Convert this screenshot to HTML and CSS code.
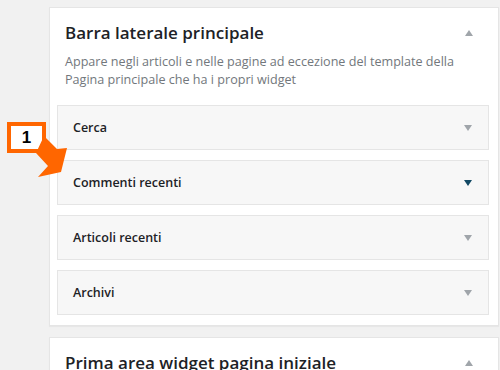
FILE: index.html
```html
<!DOCTYPE html>
<html lang="it">
  <head>
    <meta charset="UTF-8" />
    <title>Widget</title>
    <link rel="stylesheet" href="styles.css">
  </head>
  <body>
    <div class="sidebars">
      <!-- Barra laterale principale -->
      <div class="sidebar open">
        <div class="sidebar-head">
          <h2>Barra laterale principale</h2>
          <span class="toggle up"></span>
        </div>
        <p class="sidebar-desc">
          Appare negli articoli e nelle pagine ad eccezione del template della
          Pagina principale che ha i propri widget
        </p>
        <div class="widget">
          <span class="widget-title">Cerca</span>
          <span class="toggle down"></span>
        </div>
        <div class="widget">
          <span class="widget-title">Commenti recenti</span>
          <span class="toggle down active"></span>
        </div>
        <div class="widget">
          <span class="widget-title">Articoli recenti</span>
          <span class="toggle down"></span>
        </div>
        <div class="widget">
          <span class="widget-title">Archivi</span>
          <span class="toggle down"></span>
        </div>
      </div>

      <div class="sidebar">
        <div class="sidebar-head">
          <h2>Prima area widget pagina iniziale</h2>
          <span class="toggle up"></span>
        </div>
      </div>
    </div>

    <!-- step marker -->
    <div class="step-badge">1</div>
    <svg class="step-arrow" width="80" height="190" viewBox="0 0 80 190">
      <polygon points="44,136 57,149 67,148 61,172 38,177 48,166 36,153" fill="#ff6600" />
    </svg>
  </body>
</html>
```

FILE: styles.css
```css
* {
  box-sizing: border-box;
}

body {
  margin: 0;
  background: #f1f1f1;
  font-family: "Open Sans", sans-serif;
  color: #23282d;
}

.sidebars {
  margin-left: 49px;
  padding-top: 7px;
  width: 450px;
}

.sidebar {
  background: #fff;
  border: 1px solid #e5e5e5;
  box-shadow: 0 1px 1px rgba(0, 0, 0, 0.04);
  padding: 0 9px 10px 7px;
  margin-bottom: 11px;
}

.sidebar-head {
  display: flex;
  justify-content: space-between;
  align-items: center;
  padding: 13px 16px 0 8px;
}

.sidebar-head h2 {
  margin: 0;
  font-size: 17px;
  font-weight: 600;
  line-height: 24px;
  color: #1d2226;
}

.sidebar-desc {
  margin: 8px 0 16px 8px;
  font-size: 12.6px;
  line-height: 18px;
  color: #72777c;
}

.widget {
  display: flex;
  justify-content: space-between;
  align-items: center;
  height: 45px;
  padding: 0 16px 0 15px;
  margin-bottom: 10px;
  background: #f7f7f7;
  border: 1px solid #e5e5e5;
}

.widget:last-child {
  margin-bottom: 0;
}

.widget-title {
  font-size: 12.5px;
  font-weight: 600;
  color: #1d2226;
}

.toggle {
  width: 0;
  height: 0;
  border-left: 4px solid transparent;
  border-right: 4px solid transparent;
}

.toggle.down {
  border-top: 6px solid #a0a5aa;
}

.toggle.down.active {
  border-top-color: #124964;
}

.toggle.up {
  border-bottom: 6px solid #a0a5aa;
}

.step-badge {
  position: absolute;
  left: 7px;
  top: 122px;
  width: 39px;
  height: 31px;
  background: #fff;
  border: 4px solid #ff6600;
  font-family: "Liberation Sans", Arial, sans-serif;
  font-weight: bold;
  font-size: 17px;
  line-height: 23px;
  text-align: center;
  color: #000;
}

.step-arrow {
  position: absolute;
  left: 0;
  top: 0;
}
```
